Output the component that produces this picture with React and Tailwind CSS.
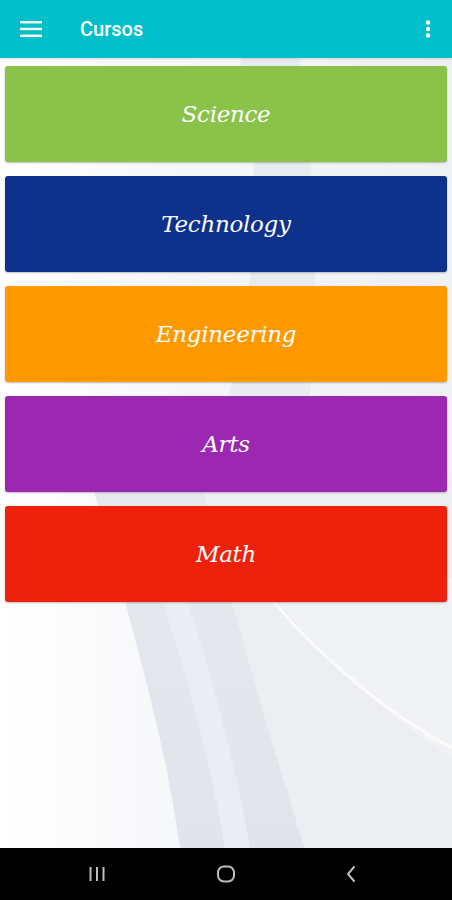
import React from 'react';

const courses = [
  { name: 'Science', color: 'bg-[#8bc34a]' },
  { name: 'Technology', color: 'bg-[#0e318b]' },
  { name: 'Engineering', color: 'bg-[#ff9900]' },
  { name: 'Arts', color: 'bg-[#9c27b0]' },
  { name: 'Math', color: 'bg-[#ee220c]' },
];

// soft grey swooshes behind the list
function Backdrop() {
  return (
    <svg className="absolute inset-0 h-full w-full" viewBox="0 0 452 790" preserveAspectRatio="none">
      <defs>
        <linearGradient id="fade" x1="0" y1="0" x2="1" y2="0">
          <stop offset="0" stopColor="#ffffff" />
          <stop offset="0.35" stopColor="#f7f8fa" />
          <stop offset="1" stopColor="#eef0f3" />
        </linearGradient>
        <linearGradient id="band" x1="0" y1="0" x2="0" y2="1">
          <stop offset="0" stopColor="#e6e9ee" />
          <stop offset="1" stopColor="#e1e5eb" />
        </linearGradient>
      </defs>
      <rect width="452" height="790" fill="url(#fade)" />
      <path d="M240 0 C 270 150 250 300 200 420 L 300 420 C 320 300 320 150 300 0 Z" fill="#e8ebef" />
      <path d="M90 420 C 130 560 165 680 180 790 L 305 790 C 270 680 235 560 200 420 Z" fill="url(#band)" />
      <path d="M155 520 C 185 610 210 700 225 790 L 250 790 C 235 700 210 610 180 520 Z" fill="#eaedf1" />
      <path d="M200 420 C 235 560 270 680 305 790 L 452 790 L 452 420 Z" fill="#eceef1" />
      <path d="M260 520 C 320 600 390 660 452 700 L 452 520 Z" fill="#f1f2f4" />
      <path d="M270 540 C 330 610 395 660 452 690" stroke="#fafbfc" strokeWidth="3" fill="none" />
    </svg>
  );
}

export default function App() {
  return (
    <div className="flex h-[900px] w-[452px] flex-col overflow-hidden bg-white font-['Roboto',sans-serif]">
      {/* Toolbar */}
      <header className="relative z-10 flex h-[58px] shrink-0 items-center bg-[#00bfca] px-5 text-white shadow">
        <svg width="22" height="16" viewBox="0 0 22 16" className="shrink-0">
          <rect x="0" y="0" width="22" height="2.4" fill="white" />
          <rect x="0" y="6.8" width="22" height="2.4" fill="white" />
          <rect x="0" y="13.6" width="22" height="2.4" fill="white" />
        </svg>
        <h1 className="ml-[38px] text-[20px] font-medium">Cursos</h1>
        <svg width="6" height="18" viewBox="0 0 6 18" className="ml-auto mr-[1px]">
          <circle cx="3" cy="2.5" r="2.2" fill="white" />
          <circle cx="3" cy="9" r="2.2" fill="white" />
          <circle cx="3" cy="15.5" r="2.2" fill="white" />
        </svg>
      </header>

      {/* Course list */}
      <main className="relative flex-1">
        <Backdrop />
        <div className="relative flex flex-col gap-[14px] px-[5px] pt-[8px]">
          {courses.map((c) => (
            <div
              key={c.name}
              className={`flex h-[96px] items-center justify-center rounded-[3px] shadow-[0_1px_2px_rgba(0,0,0,0.25)] ${c.color}`}
            >
              <span className="font-['DejaVu_Serif',serif] text-[23px] italic tracking-[-0.3px] text-white">{c.name}</span>
            </div>
          ))}
        </div>
      </main>

      {/* Navigation bar */}
      <nav className="flex h-[52px] shrink-0 items-center justify-between bg-black px-[88px]">
        <svg width="18" height="16" viewBox="0 0 18 16">
          <rect x="1.5" y="1" width="2" height="14" fill="#bdbdbd" />
          <rect x="8" y="1" width="2" height="14" fill="#bdbdbd" />
          <rect x="14.5" y="1" width="2" height="14" fill="#bdbdbd" />
        </svg>
        <svg width="20" height="18" viewBox="0 0 20 18">
          <rect x="2" y="1.5" width="16" height="15" rx="6" fill="none" stroke="#bdbdbd" strokeWidth="2" />
        </svg>
        <svg width="18" height="18" viewBox="0 0 18 18">
          <path d="M8 2 L2 9 L8 16" fill="none" stroke="#bdbdbd" strokeWidth="2" strokeLinecap="round" />
        </svg>
      </nav>
    </div>
  );
}
